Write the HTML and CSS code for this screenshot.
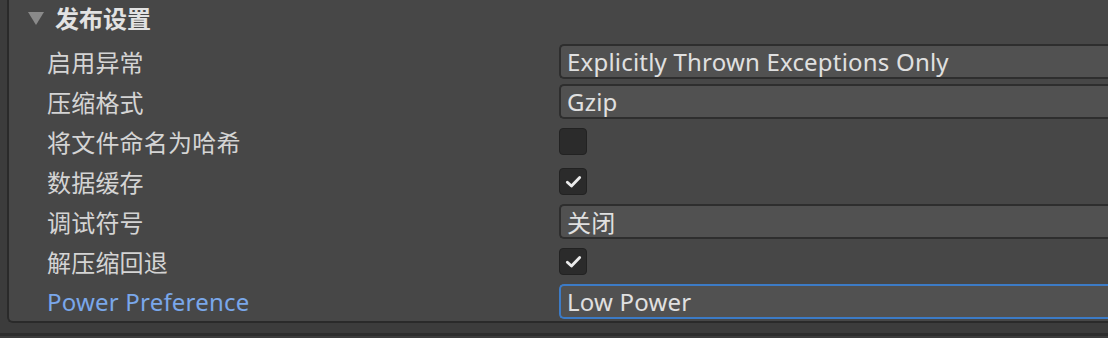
FILE: index.html
```html
<!DOCTYPE html>
<html lang="zh-CN">
<head>
  <meta charset="UTF-8" />
  <title>发布设置</title>
  <link rel="stylesheet" href="styles.css">
</head>
<body>
  <div class="panel">
    <div class="section-head">
      <span class="fold"></span>
      <span class="section-title">发布设置</span>
    </div>

    <div class="rows">
      <div class="row">
        <span class="label">启用异常</span>
        <div class="field">Explicitly Thrown Exceptions Only</div>
      </div>
      <div class="row">
        <span class="label">压缩格式</span>
        <div class="field">Gzip</div>
      </div>
      <div class="row">
        <span class="label">将文件命名为哈希</span>
        <span class="check"></span>
      </div>
      <div class="row">
        <span class="label">数据缓存</span>
        <span class="check">
          <svg viewBox="0 0 16 16" width="19" height="19"><path d="M2.8 8.6 L6.3 11.8 L13.2 4.6" /></svg>
        </span>
      </div>
      <div class="row">
        <span class="label">调试符号</span>
        <div class="field">关闭</div>
      </div>
      <div class="row">
        <span class="label">解压缩回退</span>
        <span class="check">
          <svg viewBox="0 0 16 16" width="19" height="19"><path d="M2.8 8.6 L6.3 11.8 L13.2 4.6" /></svg>
        </span>
      </div>
      <div class="row">
        <span class="label label-active">Power Preference</span>
        <div class="field field-focus">Low Power</div>
      </div>
    </div>
  </div>
  <div class="below"></div>
</body>
</html>
```

FILE: styles.css
```css
html, body {
  margin: 0;
  padding: 0;
}
body {
  width: 1108px;
  height: 338px;
  overflow: hidden;
  background-color: #3c3c3c;
  color: #d4d4d4;
  font-family: 'Noto Sans', 'Noto Sans CJK SC', sans-serif;
  font-size: 24px;
}
.panel {
  margin-left: 7px;
  width: 1101px;
  height: 323px;
  overflow: hidden;
  background-color: #474747;
  border-left: 2px solid #2a2a2a;
  border-bottom: 2px solid #2a2a2a;
  border-bottom-left-radius: 6px;
  box-sizing: border-box;
  display: flex;
  flex-direction: column;
}
.section-head {
  height: 36px;
  display: flex;
  align-items: center;
  padding-left: 19px;
  gap: 11px;
}
.fold {
  width: 0;
  height: 0;
  border-left: 8px solid transparent;
  border-right: 8px solid transparent;
  border-top: 13px solid #8a8a8a;
  margin-top: 2px;
}
.section-title {
  font-weight: bold;
  color: #e2e2e2;
}
.rows {
  padding-top: 6px;
  display: flex;
  flex-direction: column;
}
.row {
  height: 40px;
  display: flex;
  align-items: center;
}
.label {
  flex-shrink: 0;
  width: 512px;
  padding-left: 38px;
  white-space: nowrap;
  letter-spacing: 0.2px;
}
.label-active {
  color: #7aa7ea;
}
.field {
  flex: 1 0 auto;
  margin-right: -12px;
  height: 35px;
  box-sizing: border-box;
  background-color: #515151;
  border: 2px solid #2e2e2e;
  border-right: none;
  border-radius: 5px 0 0 5px;
  padding-left: 6px;
  display: flex;
  align-items: center;
  color: #e0e0e0;
  letter-spacing: 0.2px;
  white-space: nowrap;
}
.field-focus {
  border-color: #3c7bc6;
}
.check {
  flex-shrink: 0;
  width: 28px;
  height: 27px;
  box-sizing: border-box;
  background-color: #2b2b2b;
  border: 1px solid #222222;
  border-radius: 4px;
  display: flex;
  align-items: center;
  justify-content: center;
}
.check svg path {
  fill: none;
  stroke: #ececec;
  stroke-width: 2.4;
  stroke-linecap: round;
  stroke-linejoin: round;
}
.below {
  height: 9px;
  margin-top: 1px;
  border-bottom: 3px solid #2d2d2d;
}
```
